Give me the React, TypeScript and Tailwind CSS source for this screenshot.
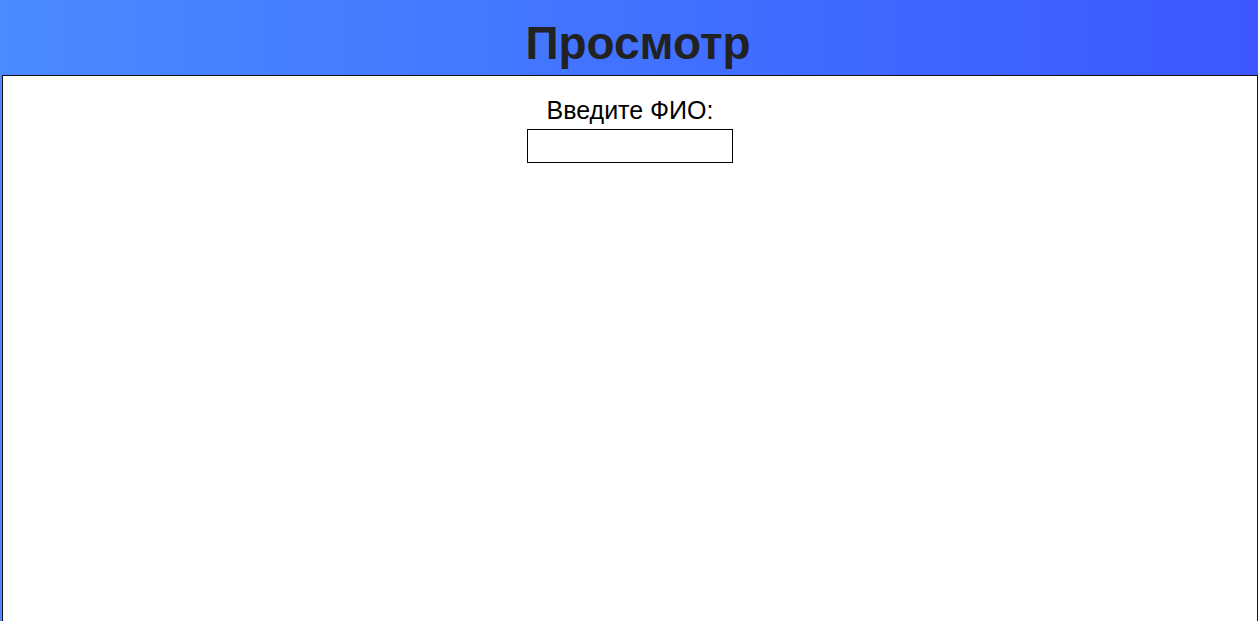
import React from "react";

export default function App() {
  return (
    <div className="h-screen w-full overflow-hidden bg-gradient-to-r from-[#4b8aff] to-[#3c57ff] flex flex-col" style={{ fontFamily: '"Liberation Sans", Arial, sans-serif' }}>
      <header className="h-[75px] shrink-0 flex items-start justify-center pt-[20px] pl-[18px]">
        <h1 className="text-[46px] font-bold text-[#222222] leading-none">Просмотр</h1>
      </header>
      <main className="flex-1 ml-[2px] bg-white border border-b-0 border-[#111111] flex flex-col items-center pt-[20px]">
        <label className="text-[25px] text-black leading-[1.15]">Введите ФИО:</label>
        <input type="text" className="mt-[4px] w-[206px] h-[34px] border border-black bg-white outline-none" />
      </main>
    </div>
  );
}
